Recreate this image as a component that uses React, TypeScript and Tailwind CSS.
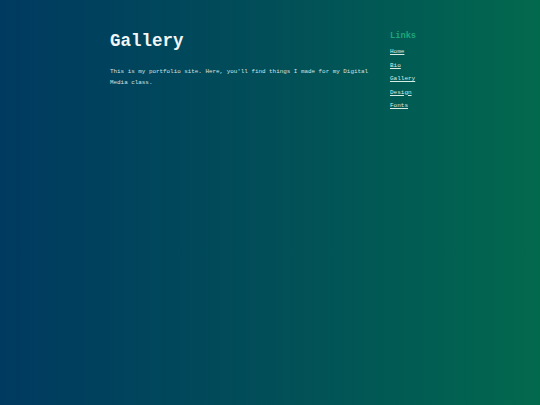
export default function App() {
    return (
        <div
            className="min-h-[405px] w-full bg-gradient-to-r from-[#003a60] via-[#024e58] to-[#03694d] text-white"
            style={{ fontFamily: '"Liberation Mono", "DejaVu Sans Mono", monospace' }}
        >
            <div className="flex pl-[110px] pt-[30px]">
                <main className="w-[268px]">
                    <h1 className="text-[17.5px] font-bold leading-[22px] text-[#f2f6f6]">Gallery</h1>
                    <p className="mt-[14px] text-[5.9px] leading-[11px] text-[#d6e2e2]">
                        This is my portfolio site. Here, you'll find things I made for my Digital Media class.
                    </p>
                </main>
                <aside className="ml-[12px] pt-[1px]">
                    <h2 className="text-[8.7px] leading-[10px] font-bold text-[#1fa57b]">Links</h2>
                    <ul className="mt-[8px] flex flex-col gap-[7.5px] text-[6px] leading-[6px] text-[#d8ece6]">
                        <li><a href="#" className="underline">Home</a></li>
                        <li><a href="#" className="underline">Bio</a></li>
                        <li><a href="#" className="underline">Gallery</a></li>
                        <li><a href="#" className="underline">Design</a></li>
                        <li><a href="#" className="underline">Fonts</a></li>
                    </ul>
                </aside>
            </div>
        </div>
    );
}
